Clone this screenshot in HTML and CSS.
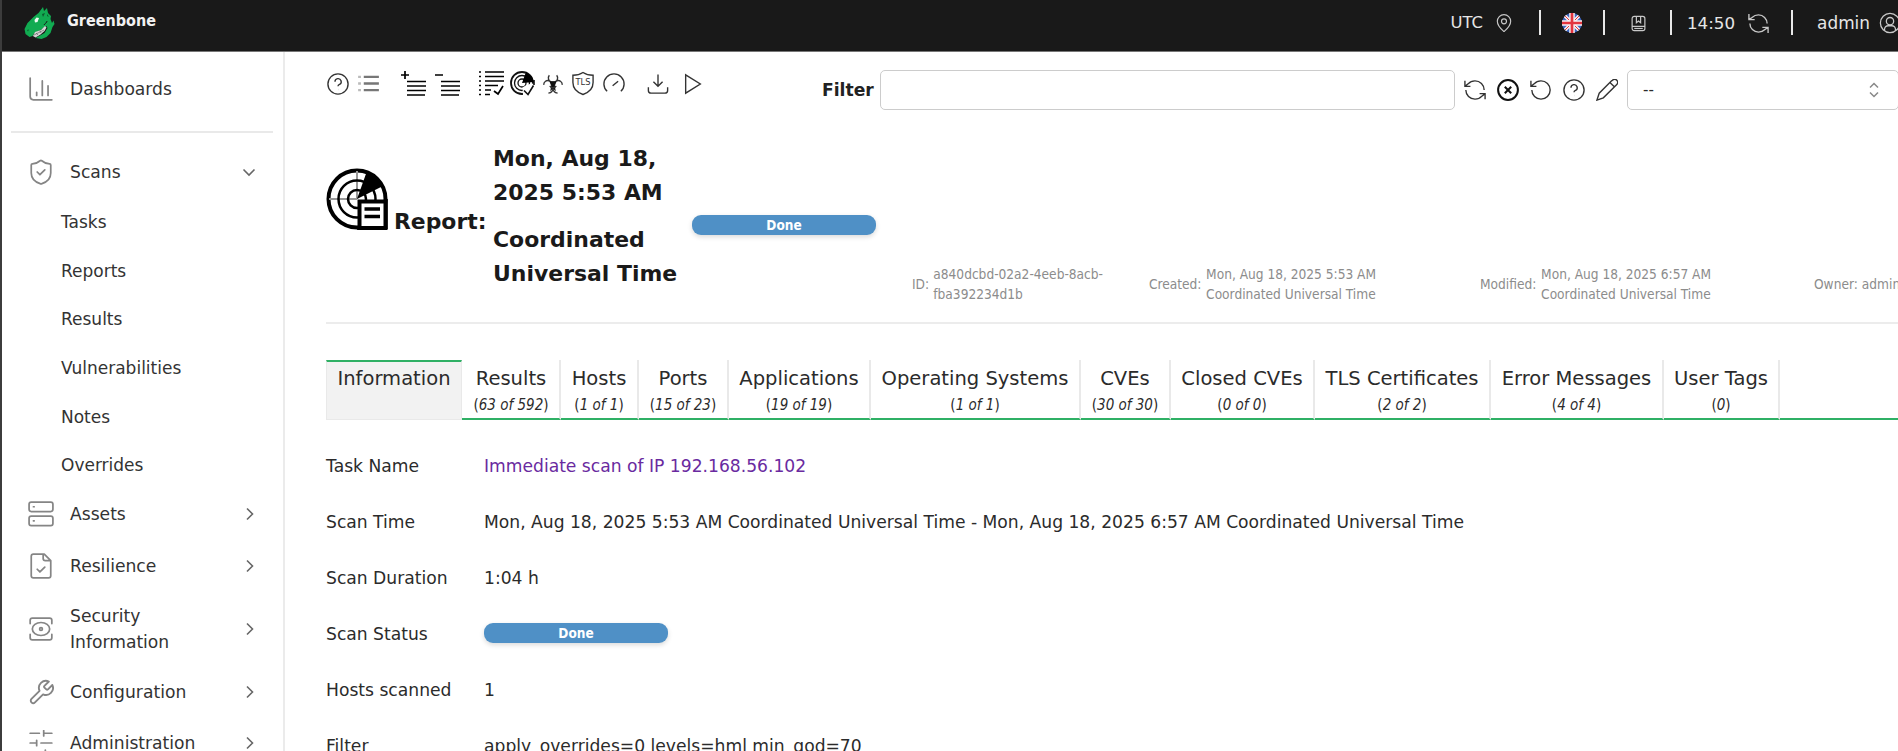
FILE: index.html
```html
<!DOCTYPE html>
<html lang="en">
<head>
<meta charset="utf-8">
<title>Greenbone - Report</title>
<link rel="stylesheet" href="styles.css">
</head>
<body>
<div class="app">
  <header class="topbar">
    <svg class="logo" viewBox="0 0 32 34">
      <path fill="#11ab51" d="M19 1l1 4 3-3 1 5 3 3-.5 3 1.500 4 1.500-2.500 1 3.500-2 3-2 6-4 4-5 2-6-1 9-5 3-5-1-2-6 4-6 3-2 3-3 1-4-3-1-5 3-6 6-6 5-4z"/>
      <path stroke="#191919" stroke-width="1" d="M20 19c1-2 3-2 3-4"/>
      <path fill="#d6d6d6" d="M9 30l2-4 6-2 4-4 1.500 1.500-2 3.500-4 3.500-5 3z"/>
      <path stroke="#555" stroke-width=".6" d="M12 27l2 2M16 25l1 2M10 29l10-5"/>
      <path fill="#eefaf2" d="M10.500 14l2-2.500 2.500.5-1.500 4-2.500.5z"/>
      <path fill="#0b5b2c" d="M3 24l2-.5-1 2zM18 8l3-1-2 4zM23 8l2 3-2-1z"/>
    </svg>
    <span class="brand">Greenbone</span>
    <div class="top-tools">
      <span class="tz">UTC</span>
      <svg class="ic pin" viewBox="0 0 24 24"><path d="M20 10c0 5-5.500 10.200-7.400 11.800a1 1 0 0 1-1.200 0C9.500 20.200 4 15 4 10a8 8 0 0 1 16 0"/><circle cx="12" cy="10" r="3"/></svg>
      <i class="bar"></i>
      <svg class="flag" viewBox="0 0 20 20">
        <circle cx="10" cy="10" r="10" fill="#3c67c4"/>
        <path d="M3 3l14 14M17 3L3 17" stroke="#f6f1f2" stroke-width="3.200"/>
        <path d="M3 3l14 14M17 3L3 17" stroke="#e2353f" stroke-width="1"/>
        <path d="M10 0v20M0 10h20" stroke="#f6f1f2" stroke-width="5.500"/>
        <path d="M10 0v20M0 10h20" stroke="#e2353f" stroke-width="2.700"/>
      </svg>
      <i class="bar"></i>
      <svg class="ic book" viewBox="0 0 24 24"><path d="M3 18V5a3 3 0 0 1 3-3h12a3 3 0 0 1 3 3v13M9 2v9l3-2.500 3 2.500V2M3 16h18v3a3 3 0 0 1-3 3H6a3 3 0 0 1-3-3z"/><path d="M6 19h12"/></svg>
      <i class="bar"></i>
      <span class="clock">14:50</span>
      <svg class="ic sync" viewBox="0 0 24 24"><path d="M21 12a9 9 0 0 0-9-9 9.750 9.750 0 0 0-6.740 2.740L2 8M2 2v6h6M3 12a9 9 0 0 0 9 9 9.750 9.750 0 0 0 6.740-2.740L22 16M16 16h6v6"/></svg>
      <i class="bar"></i>
      <span class="user">admin</span>
      <svg class="ic usr" viewBox="0 0 24 24"><circle cx="12" cy="12" r="10.500"/><circle cx="12" cy="10" r="4"/><path d="M6 20v-1a4 4 0 0 1 4-4h4a4 4 0 0 1 4 4v1"/></svg>
    </div>
  </header>

  <div class="body">
    <nav class="sidebar">
      <a class="item dash"><svg class="ni" viewBox="0 0 24 24"><path d="M2 2v17a3 3 0 0 0 3 3h17M8 18v-3M13.200 18V4.500M18.500 18V9"/></svg><span>Dashboards</span></a>
      <hr class="rule">
      <a class="item scans"><svg class="ni" viewBox="0 0 24 24"><path d="M21 13c0 5-3.500 8.500-8.600 9.950a1 1 0 0 1-.700 0C6.500 21.500 3 18 3 13V5.500a1 1 0 0 1 1-1c2.500 0 5-1 7.200-2.900a1.170 1.170 0 0 1 1.520 0C14.900 3.500 17.500 4.500 20 4.500a1 1 0 0 1 1 1zM8.500 12l2.500 2.500 4.500-4.500"/></svg><span>Scans</span><svg class="chev" viewBox="0 0 14 14"><path d="M1.500 4.500L7 10l5.500-5.500"/></svg></a>
      <div class="sub">
        <a>Tasks</a><a>Reports</a><a>Results</a><a>Vulnerabilities</a><a>Notes</a><a>Overrides</a>
      </div>
      <a class="item assets"><svg class="ni" viewBox="0 0 24 24"><rect x="1" y="1" width="22" height="8.700" rx="2"/><rect x="1" y="14" width="22" height="8.700" rx="2"/><path d="M5 5.300h.7M5 18.300h.7"/></svg><span>Assets</span><svg class="chev" viewBox="0 0 14 14"><path d="M5 1.500L10.500 7 5 12.500"/></svg></a>
      <a class="item resil"><svg class="ni" viewBox="0 0 24 24"><path d="M15 1H5a2 2 0 0 0-2 2v18a2 2 0 0 0 2 2h14a2 2 0 0 0 2-2V7zM14 1v4a2 2 0 0 0 2 2h5M8.500 15l2.500 2.500 4.500-4.500"/></svg><span>Resilience</span><svg class="chev" viewBox="0 0 14 14"><path d="M5 1.500L10.500 7 5 12.500"/></svg></a>
      <a class="item secinfo"><svg class="ni" viewBox="0 0 24 24"><path d="M22 17v3a2 2 0 0 1-2 2H4a2 2 0 0 1-2-2v-3M22 7V4a2 2 0 0 0-2-2H4a2 2 0 0 0-2 2v3"/><ellipse cx="12" cy="12" rx="8" ry="6"/><circle cx="12" cy="12" r="1.300"/></svg><span>Security<br>Information</span><svg class="chev" viewBox="0 0 14 14"><path d="M5 1.500L10.500 7 5 12.500"/></svg></a>
      <a class="item config"><svg class="ni" viewBox="0 0 24 24"><path d="M14.700 6.300a1 1 0 0 0 0 1.400l1.600 1.600a1 1 0 0 0 1.400 0l3.770-3.770a6 6 0 0 1-7.940 7.940l-6.910 6.910a2.120 2.120 0 0 1-3-3l6.910-6.910a6 6 0 0 1 7.940-7.940z" transform="translate(-.7 -.4) scale(1.080)"/></svg><span>Configuration</span><svg class="chev" viewBox="0 0 14 14"><path d="M5 1.500L10.500 7 5 12.500"/></svg></a>
      <a class="item admin"><svg class="ni" viewBox="0 0 24 24"><path d="M22 3h-7.500M10.500 3H2M22 12H12M8 12H2M22 21h-6M12 21H2M14.500 .5v5M8 9.500v5M16 18.500v5"/></svg><span>Administration</span><svg class="chev" viewBox="0 0 14 14"><path d="M5 1.500L10.500 7 5 12.500"/></svg></a>
    </nav>

    <main class="main">
      <div class="toolbar">
        <div class="actions">
          <svg class="ai" viewBox="0 0 24 24"><circle cx="12" cy="12" r="11"/><path d="M8.700 9.500a3.400 3.400 0 1 1 5 3c-1.200.6-1.700 1-1.700 2M12 18h.1"/></svg>
          <svg class="ai list" viewBox="0 0 22 18"><path class="lt" d="M0 2h3M0 9h3M0 16h3"/><path d="M6 2h16M6 9h16M6 16h16"/></svg>
          <svg class="ai solid ml1" viewBox="0 0 25 25"><path d="M0 4h8M4 0v8M6 10.500h19M6 15h19M6 19.500h19M6 24h18"/></svg>
          <svg class="ai solid ml2" viewBox="0 0 25 25"><path d="M0 4h8M6 10.500h19M6 15h19M6 19.500h19M6 24h18"/></svg>
          <svg class="ai solid ml3" viewBox="0 0 25 25"><path d="M6 1h19M6 5.500h19M6 10h19M6 14.500h13M6 19h6M6 23.500h5M0 1h2M0 5.500h2M0 10h2M0 14.500h2M0 19h2M0 23.500h2M15 20l4 3 5-8"/></svg>
          <svg class="ai radar ml4" viewBox="0 0 25 25"><circle cx="12" cy="12" r="11" stroke-width="1.800"/><circle cx="12" cy="12" r="7.500"/><circle cx="12" cy="12" r="4"/><path d="M12 12L16 1l6 5 2 5z" fill="#000" stroke="none"/><path d="M12.500 16.500l5-3 6-1 1.500 2v10H13z" fill="#fff" stroke="none"/><path d="M24 9v5M14 19.500l4 4 5.500-9" stroke-width="1.600"/></svg>
          <svg class="ai bio ml5" viewBox="0 0 24 24"><path d="M8 2.500c-2 2.500-1 6 2 7.500h4c3-1.500 4-5 2-7.500M2 13c-.5-3 3-6.500 7-4l3 4 3-4c4-2.500 7.500 1 7 4M7 22c4-.5 5-3 5-6 0 3 1 5.500 5 6"/><path d="M8 9h8l-2 5 1 6-3-3-3 3 1-6z" fill="#111" stroke="none"/><path d="M8.500 14a4 4 0 0 0 7 0"/></svg>
          <svg class="ai tls ml6" viewBox="0 0 24 26"><path d="M12 1c3 2 7 3 11 3v8c0 7-5 11-11 13C6 23 1 19 1 12V4c4 0 8-1 11-3z"/><text x="12" y="15" text-anchor="middle">TLS</text></svg>
          <svg class="ai gauge ml7" viewBox="0 0 24 24"><path d="M4.500 20A11 11 0 1 1 19.500 20M10.500 14l6-5"/></svg>
          <svg class="ai ml8" viewBox="0 0 24 24"><path d="M12 1.500v13M7 9.500l5 5 5-5M1.500 15.500V19a3 3 0 0 0 3 3h15a3 3 0 0 0 3-3v-3.500"/></svg>
          <svg class="ai ml9" viewBox="0 0 24 24"><path d="M4 2l16 10L4 22z"/></svg>
        </div>
        <div class="filter">
          <b class="flabel">Filter</b>
          <div class="finput"></div>
          <div class="ficons">
            <svg class="ai" viewBox="0 0 24 24"><path d="M22 12a10 10 0 0 0-10-10 10 10 0 0 0-7.500 3.300L1 8M1 2v6h6M2 12a10 10 0 0 0 10 10 10 10 0 0 0 7.500-3.300L23 16M17 16h6v6"/></svg>
            <svg class="ai strong" viewBox="0 0 24 24"><circle cx="12" cy="12" r="10.800"/><path d="M8.500 8.500l7 7M15.500 8.500l-7 7"/></svg>
            <svg class="ai" viewBox="0 0 24 24"><path d="M2 12a10 10 0 1 0 10-10 10 10 0 0 0-7.500 3.300L1 8M1 2v6h6"/></svg>
            <svg class="ai" viewBox="0 0 24 24"><circle cx="12" cy="12" r="11"/><path d="M8.700 9.500a3.400 3.400 0 1 1 5 3c-1.200.6-1.700 1-1.700 2M12 18h.1"/></svg>
            <svg class="ai" viewBox="0 0 24 24"><path d="M17 2l1-.7a3.300 3.300 0 0 1 4.700 4.700L8 20.500 1 23l2.500-7.500zM15.500 4l4.500 4.500"/></svg>
          </div>
          <div class="select"><span>--</span><svg class="updown" viewBox="0 0 12 16"><path d="M2 5.500L6 1.500l4 4M2 10.500l4 4 4-4"/></svg></div>
        </div>
      </div>

      <div class="heading">
        <svg class="report" viewBox="0 0 62 62">
          <circle cx="31" cy="31" r="28.500" fill="none" stroke="#000" stroke-width="4"/>
          <path d="M31 3v28M3 31h28" stroke="#999" stroke-width="2"/>
          <g fill="none" stroke="#000" stroke-width="2.500"><circle cx="31" cy="31" r="18.500"/><circle cx="31" cy="31" r="9"/></g>
          <path d="M31 31L41 3q11 5 16 15z"/>
          <path d="M33.500 33.500h26V60h-26z" fill="#fff" stroke="#000" stroke-width="4"/>
          <path d="M31 60h30M60 31v30" stroke="#000" stroke-width="3.500"/>
          <path d="M38.500 41h15.500M38.500 48.500h15.500" stroke="#000" stroke-width="3.300"/>
        </svg>
        <h2 class="title">Report:</h2>
        <div class="when"><p>Mon, Aug 18,<br>2025 5:53 AM</p><p>Coordinated<br>Universal Time</p></div>
        <div class="status">Done</div>
        <div class="meta">
          <div class="m id"><span>ID:</span><span>a840dcbd-02a2-4eeb-8acb-<br>fba392234d1b</span></div>
          <div class="m created"><span>Created:</span><span>Mon, Aug 18, 2025 5:53 AM<br>Coordinated Universal Time</span></div>
          <div class="m modified"><span>Modified:</span><span>Mon, Aug 18, 2025 6:57 AM<br>Coordinated Universal Time</span></div>
          <div class="m owner"><span>Owner:</span><span>admin</span></div>
        </div>
      </div>

      <div class="tabs">
        <div class="tab active"><span>Information</span></div>
        <div class="tab t2"><span>Results</span><small>(<i>63 of 592</i>)</small></div>
        <div class="tab t3"><span>Hosts</span><small>(<i>1 of 1</i>)</small></div>
        <div class="tab t4"><span>Ports</span><small>(<i>15 of 23</i>)</small></div>
        <div class="tab t5"><span>Applications</span><small>(<i>19 of 19</i>)</small></div>
        <div class="tab t6"><span>Operating Systems</span><small>(<i>1 of 1</i>)</small></div>
        <div class="tab t7"><span>CVEs</span><small>(<i>30 of 30</i>)</small></div>
        <div class="tab t8"><span>Closed CVEs</span><small>(<i>0 of 0</i>)</small></div>
        <div class="tab t9"><span>TLS Certificates</span><small>(<i>2 of 2</i>)</small></div>
        <div class="tab t10"><span>Error Messages</span><small>(<i>4 of 4</i>)</small></div>
        <div class="tab t11"><span>User Tags</span><small>(<i>0</i>)</small></div>
        <div class="rest"></div>
      </div>

      <div class="info">
        <span>Task Name</span><a class="link">Immediate scan of IP 192.168.56.102</a>
        <span>Scan Time</span><span>Mon, Aug 18, 2025 5:53 AM Coordinated Universal Time - Mon, Aug 18, 2025 6:57 AM Coordinated Universal Time</span>
        <span>Scan Duration</span><span>1:04 h</span>
        <span>Scan Status</span><div class="status">Done</div>
        <span>Hosts scanned</span><span>1</span>
        <span>Filter</span><span>apply_overrides=0 levels=hml min_qod=70</span>
      </div>
    </main>
  </div>
</div>
</body>
</html>
```
FILE: styles.css
```css
* { box-sizing: border-box; }
body { margin: 0; background: #fff; color: #2b2b2b; font: 17.150px/26px "DejaVu Sans", sans-serif; overflow: hidden; }
.app { height: 751px; overflow: hidden; border-left: 2px solid #3c3c3c; display: flex; flex-direction: column; }
svg { display: block; flex: none; fill: none; }

.topbar { height: 52px; flex: none; background: #191919; border-bottom: 1px solid #777; display: flex; align-items: flex-start; color: #e6e6e6; overflow: hidden; }
.logo { width: 32px; height: 34px; margin: 6px 0 0 22px; }
.brand { font: bold 16px/26px "DejaVu Sans Condensed", "DejaVu Sans", sans-serif; font-stretch: condensed; margin: 8px 0 0 11px; color: #f2f2f2; }
.top-tools { margin-left: auto; margin-right: -3px; height: 46px; display: flex; align-items: center; font-size: 16.4px; white-space: nowrap; }
.ic { width: 20px; height: 20px; stroke: #c8c8c8; stroke-width: 1.4; }
.bar { width: 2px; height: 25px; background: #e8e8e8; margin-top: -1px; }
.pin { margin: 0 25px 0 11px; }
.flag { width: 20px; height: 20px; margin: 0 21px; }
.book { width: 17px; height: 19px; margin: 0 23px 0 25px; stroke-width: 1.7; }
.clock { margin-left: 15px; font-size: 16.700px; }
.sync { width: 23px; height: 23px; margin: 0 21px 0 12px; }
.user { margin: 0 9px 0 24px; font-size: 16.900px; }
.usr { width: 22px; height: 22px; }

.body { flex: 1; display: flex; min-height: 0; }
.sidebar { width: 283px; flex: none; border-right: 2px solid #ebebeb; height: 720px; color: #333; }
.item { display: flex; align-items: center; padding: 0 27px 0 26px; }
.item span { margin-left: 16px; flex: 1; }
.ni { width: 26px; height: 26px; stroke: #858585; stroke-width: 1.6; stroke-linecap: round; stroke-linejoin: round; }
.chev { width: 14px; height: 14px; stroke: #666; stroke-width: 1.6; }
.dash { height: 73px; }
.rule { border: 0; height: 2px; background: #e9e9e9; margin: 6px 10px 0 9px; }
.scans { height: 65px; padding-top: 12px; }
.sub { padding-left: 59px; font-size: 17px; margin-bottom: -1px; }
.sub a { display: block; height: 48.700px; line-height: 48.700px; }
.assets { height: 50px; }
.resil { height: 53px; }
.secinfo { height: 74px; }
.config { height: 51px; }
.admin { height: 51px; }

.main { flex: 1; min-width: 0; padding-left: 41px; overflow: hidden; }
.toolbar { display: flex; height: 75px; }
.actions { display: flex; align-items: center; height: 63px; width: 496px; flex: none; padding-left: 1px; }
.ai { width: 22px; height: 22px; stroke: #333; stroke-width: 1.5; }
.list { width: 21px; height: 17px; margin-left: 9px; stroke: #777; stroke-width: 2.4; }
.list .lt { stroke: #bbb; }
.solid { width: 25px; height: 25px; stroke: #000; stroke-width: 1.7; }
.ml1 { margin-left: 22px; }
.ml2 { margin-left: 9px; }
.ml3 { margin-left: 19px; }
.radar { width: 25px; height: 25px; margin-left: 6px; stroke: #111; stroke-width: 1.3; }
.ml5 { margin-left: 7px; }
.tls { width: 22px; height: 25px; margin-left: 8px; }
.tls text { font: 9px "DejaVu Sans", sans-serif; fill: #333; stroke: none; }
.ml7 { margin-left: 9px; }
.ml8 { margin-left: 22px; }
.ml9 { margin-left: 13px; }
.filter { display: flex; align-items: center; height: 76px; flex: none; }
.flabel { width: 58px; color: #222; }
.finput { width: 575px; height: 40px; border: 1.500px solid #ccc; border-radius: 5px; }
.ficons { display: flex; gap: 11px; padding-left: 9px; width: 172px; }
.strong { stroke: #111; stroke-width: 2.2; }
.select { width: 272px; height: 40px; border: 1.500px solid #ccc; border-radius: 5px; display: flex; align-items: center; justify-content: space-between; padding: 0 18px 0 15px; font-size: 15px; }
.updown { width: 12px; height: 16px; stroke: #888; stroke-width: 1.5; }

.heading { height: 198px; border-bottom: 2px solid #ececec; display: flex; align-items: flex-start; margin-top: -1px; color: #1a1a1a; font-weight: bold; }
.heading > * { flex: none; }
.report { width: 62px; height: 62px; margin-top: 42px; fill: #000; }
.title { width: 105px; margin: 79px 0 0; padding-left: 6px; font-size: 21.900px; line-height: 34px; }
.when { width: 199px; font-size: 21.950px; line-height: 33.700px; white-space: nowrap; padding-top: 16px; }
.when p { margin: 0 0 13.500px; }
.status { width: 184px; height: 20px; border-radius: 9px; background: #4f90c6; color: #fff; font: bold 13.500px/20px "DejaVu Sans Condensed", sans-serif; font-stretch: condensed; text-align: center; box-shadow: 0 2px 5px rgba(0, 0, 0, .15); }
.heading .status { margin-top: 89px; }
.meta { display: flex; height: 40px; margin: 138px 0 0 36px; font: 13.600px/20px "DejaVu Sans Condensed", sans-serif; font-stretch: condensed; color: #8c8c8c; white-space: nowrap; }
.m { display: flex; align-items: center; flex: none; justify-content: space-between; }
.id { width: 191px; margin-right: 46px; }
.created { width: 227px; margin-right: 104px; }
.modified { width: 231px; margin-right: 103px; }
.owner { gap: 4px; }

.tabs { display: flex; height: 60px; margin-top: 36px; }
.tab { flex: none; text-align: center; border-right: 2px solid #e9e9e9; border-bottom: 2px solid #2fb065; padding-top: 6px; font-size: 19.550px; white-space: nowrap; }
.tab span { display: block; line-height: 26px; }
.tab small { display: block; font: 15px/22px "DejaVu Sans Condensed", sans-serif; font-stretch: condensed; padding-top: 2px; }
.active { width: 136px; background: #f2f2f2; border: 1px solid #e9e9e9; border-top: 2px solid #2fb065; padding-top: 4px; }
.t2 { width: 99px; padding-left: 1px; }
.t3 { width: 78px; }
.t4 { width: 90px; }
.t5 { width: 142px; }
.t6 { width: 210px; }
.t7 { width: 90px; }
.t8 { width: 144px; }
.t9 { width: 176px; }
.t10 { width: 173px; }
.t11 { width: 116px; }
.rest { flex: 1; border-bottom: 2px solid #2fb065; }

.info { display: grid; grid-template-columns: 158px 1fr; grid-auto-rows: 55.900px; align-items: center; margin-top: 18.500px; white-space: nowrap; }
.info .status { margin-top: -2px; }
.link { color: #6a2aa0; }
```
